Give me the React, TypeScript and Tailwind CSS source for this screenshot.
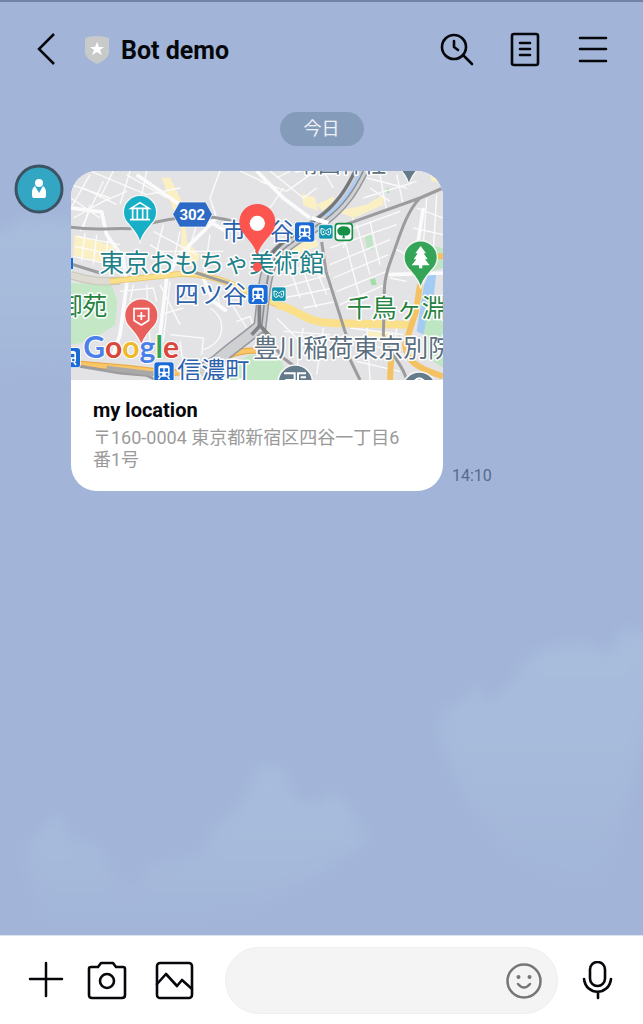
import React from 'react';

const minorRoads = [
  'M3 120 L60 20', 'M3 90 L90 150', 'M40 60 L140 110', 'M60 9 L230 80 L330 60',
  'M100 40 L30 190', 'M130 9 L90 90', 'M180 9 L150 110', 'M230 9 L215 80',
  'M3 50 L120 90', 'M10 150 L100 100 L170 70', 'M170 20 L290 90', 'M60 110 L40 180',
  'M20 205 L150 230', 'M15 235 L140 262', 'M10 265 L135 292', 'M45 195 L35 280', 'M80 200 L70 290', 'M115 205 L105 295',
  'M250 190 L380 260', 'M240 230 L330 290', 'M280 170 L260 250', 'M330 190 L300 330', 'M380 170 L340 300',
  'M270 250 L460 250', 'M420 200 L400 330', 'M150 370 L250 360 L260 400', 'M190 350 L180 400', 'M230 350 L240 520',
  'M270 350 L330 470', 'M300 340 L280 520', 'M340 420 L270 440', 'M300 500 L400 510 L395 560', 'M330 520 L340 590',
  'M420 420 C470 450 470 520 400 545', 'M480 400 L530 480', 'M500 460 L540 445 L560 500', 'M440 360 L450 420',
  'M450 9 L420 90 L440 150', 'M510 9 L620 60', 'M570 40 L650 70 L720 20', 'M600 9 L700 90 L740 60', 'M620 30 L660 9',
  'M640 60 L600 120', 'M760 9 L790 60', 'M680 120 L720 150', 'M900 60 L960 100', 'M880 90 L1040 40', 'M930 20 L950 130',
  'M980 20 L1000 110', 'M890 30 L1010 60', 'M860 170 L900 320', 'M900 160 L930 290', 'M800 200 L990 130',
  'M780 240 L980 170', 'M780 290 L960 215', 'M790 330 L955 260', 'M800 370 L950 310', 'M810 410 L945 350',
  'M820 200 L870 390', 'M850 150 L820 240', 'M640 320 L760 270', 'M630 360 L780 320', 'M640 390 L790 360',
  'M700 420 L800 400', 'M690 280 L740 420', 'M660 300 L690 390', 'M720 260 L770 380',
  'M620 450 L700 530', 'M640 490 L780 500', 'M700 480 L680 600', 'M760 480 L740 620', 'M840 480 L1000 500',
  'M870 520 L1000 560', 'M860 580 L990 610', 'M890 470 L900 636', 'M980 480 L960 636', 'M1040 120 L1119 150',
  'M1030 180 L1119 200', 'M1070 90 L1060 230', 'M1100 80 L1090 250', 'M970 240 L1010 260', 'M960 330 L1010 340',
];

const wideRoads = [
  'M3 120 L95 132 L110 200 L160 270 L170 350', 'M200 20 L330 110 L470 190', 'M440 150 L330 260 L290 330 L270 500',
  'M560 9 L640 90 L720 150', 'M170 350 L150 500 L130 560', 'M1060 120 L1040 250', 'M955 320 L1119 315',
  'M400 330 L430 400 L470 430',
];

const greyRoads = [
  'M3 178 C90 190 130 178 180 182 C250 160 320 145 400 146 C450 146 460 155 500 162',
  'M1119 60 L1050 90 L820 172',
  'M1050 90 C1010 130 990 200 965 270 C935 350 945 370 942 430 L940 500 C960 560 1000 590 1010 636',
  'M755 222 L768 310 L828 500 L838 570 L870 636',
  'M3 288 L100 318', 'M570 480 L640 570 L680 600', 'M3 590 L150 615 L230 622 L260 636', 'M370 312 L490 350',
];

const yellowAreas = [
  'M15 200 L135 235 L125 290 L10 262Z', 'M275 30 L300 28 L345 120 L350 220 L390 260 L375 300 L330 280 L335 190Z',
  'M695 78 L735 88 L745 130 L700 112Z', 'M800 130 L890 110 L940 80 L940 110 L850 150Z',
  'M740 110 L790 85 L800 110 L770 140Z', 'M640 240 L740 215 L745 235 L650 270Z', 'M1080 15 L1119 20 L1119 45 L1085 40Z',
  'M890 490 L960 490 L955 510 L890 505Z',
];

type LabelProps = { x: number; y: number; fill: string; size?: number; children: React.ReactNode };

function MapLabel({ x, y, fill, size = 75, children }: LabelProps) {
  return (
    <text
      x={x}
      y={y}
      fill={fill}
      fontSize={size}
      stroke="#ffffff"
      strokeWidth={9}
      strokeLinejoin="round"
      paintOrder="stroke"
      className="font-['Noto_Sans_CJK_JP',sans-serif]"
    >
      {children}
    </text>
  );
}

function Pin({ x, y, fill, children }: { x: number; y: number; fill: string; children?: React.ReactNode }) {
  return (
    <g transform={`translate(${x} ${y})`}>
      <path
        d="M0 94 C-5 66 -20 54 -34 37 A50 50 0 1 1 34 37 C20 54 5 66 0 94Z"
        fill={fill}
        stroke="#f5f5f5"
        strokeWidth="4"
      />
      {children}
    </g>
  );
}

function Train({ x, y }: { x: number; y: number }) {
  return (
    <g transform={`translate(${x} ${y})`}>
      <rect x="-2" y="-2" width="62" height="62" rx="10" fill="#fff" />
      <rect width="58" height="58" rx="8" fill="#1b6bd6" />
      <path d="M12 17 Q12 9 20 9 H38 Q46 9 46 17 V38 Q46 43 40 43 H18 Q12 43 12 38Z" fill="#fff" />
      <path d="M17 18 H27 V28 H17Z M31 18 H41 V28 H31Z" fill="#1b6bd6" />
      <circle cx="20" cy="36" r="4" fill="#1b6bd6" />
      <circle cx="38" cy="36" r="4" fill="#1b6bd6" />
      <path d="M18 43 L12 51 M40 43 L46 51" stroke="#fff" strokeWidth="5" />
    </g>
  );
}

function Metro({ x, y }: { x: number; y: number }) {
  return (
    <g transform={`translate(${x} ${y})`}>
      <rect width="43" height="43" rx="6" fill="#1295ad" stroke="#fff" strokeWidth="2" />
      <path
        d="M7 12 L14 13 L21 19 L29 13 L36 12 V25 L32 31 L26 30 L21 24 L17 30 L11 31 L7 25Z M14 19 V25 M29 19 V25"
        fill="none"
        stroke="#fff"
        strokeWidth="3"
      />
    </g>
  );
}

function LocationMap() {
  return (
    <svg viewBox="3 9 1116 627" className="block w-full" role="img" aria-label="my location map">
      <rect x="0" y="0" width="1122" height="640" fill="#e3e3e5" />

      {/* Parks and water */}
      <path d="M3 345 L125 350 L142 400 L135 470 L60 520 L3 530Z" fill="#c4e8c6" />
      <path d="M470 600 L540 560 L630 570 L660 636 L440 636Z" fill="#c4e8c6" />
      <path d="M1075 230 L1119 240 L1119 300 L1085 310Z M1060 430 L1119 400 L1119 600 L1060 560Z M885 200 L905 195 L910 245 L890 240Z" fill="#bfe6c3" />
      <path d="M1062 350 L1080 310 L1098 320 L1090 400 L1070 450 L1060 500 L1040 490Z" fill="#a3cbf3" />
      <path d="M950 62 L957 60 L958 75 L950 74Z M900 335 L915 330 L920 350 L905 352Z" fill="#9ee0a6" />
      {yellowAreas.map((d) => (
        <path key={d} d={d} fill="#fbf0c4" />
      ))}

      {/* Streets */}
      <g fill="none" stroke="#fbfbfb">
        {minorRoads.map((d) => (
          <path key={d} d={d} strokeWidth="4" />
        ))}
        {wideRoads.map((d) => (
          <path key={d} d={d} strokeWidth="11" />
        ))}
      </g>

      {/* Main roads */}
      <g fill="none" strokeLinejoin="round">
        <path d="M3 322 C50 335 90 345 150 338" stroke="#c9c6bb" strokeWidth="25" />
        <path d="M3 322 C50 335 90 345 150 338" stroke="#dedbd1" strokeWidth="19" />
        <path d="M120 340 L330 318 C400 315 450 335 490 350 L610 405 C690 425 700 462 780 465 L1015 470" stroke="#e8c766" strokeWidth="18" />
        <path d="M120 340 L330 318 C400 315 450 335 490 350 L610 405 C690 425 700 462 780 465 L1015 470" stroke="#fbe08c" strokeWidth="13" />
        <path d="M620 410 C690 425 700 462 780 465 L1015 470" stroke="#fbe08c" strokeWidth="24" />
        <path d="M30 588 L170 600 L300 615 L410 605 C450 570 500 545 560 548" stroke="#e9a83f" strokeWidth="19" />
        <path d="M30 588 L170 600 L300 615 L410 605 C450 570 500 545 560 548" stroke="#f9c566" strokeWidth="13" />
        <path d="M1050 350 L1038 430 L1005 530 C1010 580 1040 600 1119 625 M1085 265 H1119 M960 636 L965 540" stroke="#f5c263" strokeWidth="18" />
        {greyRoads.map((d) => (
          <path key={d} d={d} stroke="#9c9c9e" strokeWidth="9" />
        ))}
      </g>

      {/* Railway */}
      <g fill="none">
        <path d="M875 9 C850 60 820 110 760 155 C700 200 620 240 600 290 C580 340 580 400 570 475 C530 510 470 550 440 580 L390 610" stroke="#97999d" strokeWidth="40" />
        <path d="M875 9 C850 60 820 110 760 155 C700 200 620 240 600 290 C580 340 580 400 570 475 C530 510 470 550 440 580 L390 610" stroke="#cfd0d3" strokeWidth="31" />
        <path d="M880 9 C855 60 825 110 765 155 C705 200 625 240 605 290 C585 340 585 400 575 475" stroke="#8b8e93" strokeWidth="5" />
        <path d="M855 9 C830 60 800 110 745 150 C690 190 610 230 590 285" stroke="#74777c" strokeWidth="10" />
        <path d="M868 20 C840 70 815 110 765 145" stroke="#a9cdf5" strokeWidth="8" />
        <path d="M725 150 L775 165" stroke="#fff" strokeWidth="12" />
        <path d="M568 400 V475 L545 500 M568 470 L600 505" stroke="#808286" strokeWidth="11" />
        <path d="M110 600 L290 622" stroke="#aaa9a8" strokeWidth="14" />
      </g>

      {/* Place names */}
      <MapLabel x={676} y={12} fill="#5b6f7f" size={68}>靖国神社</MapLabel>
      <MapLabel x={456} y={216} fill="#2c62ad" size={72}>市</MapLabel>
      <MapLabel x={600} y={216} fill="#2c62ad" size={72}>谷</MapLabel>
      <MapLabel x={88} y={312} fill="#1f8189">東京おもちゃ美術館</MapLabel>
      <MapLabel x={314} y={404} fill="#2c62ad" size={72}>四ツ谷</MapLabel>
      <MapLabel x={830} y={448} fill="#25833f">千鳥ヶ淵</MapLabel>
      <MapLabel x={-38} y={442} fill="#25833f">御苑</MapLabel>
      <MapLabel x={550} y={566} fill="#5b6f7f">豊川稲荷東京別院</MapLabel>
      <MapLabel x={322} y={634} fill="#2c62ad" size={72}>信濃町</MapLabel>

      <Train x={675} y={163} />
      <Metro x={746} y={170} />
      <rect x="796" y="167" width="51" height="50" rx="9" fill="#fff" stroke="#159046" strokeWidth="5" />
      <path d="M821 175 C838 175 844 186 840 195 C836 204 828 203 823 202 L825 211 H817 L819 202 C810 205 802 198 802 190 C802 180 811 175 821 175Z" fill="#159046" />
      <Train x={535} y={350} />
      <Metro x={605} y={357} />
      <Train x={253} y={583} />
      <Train x={-28} y={540} />
      <rect x="0" y="270" width="9" height="33" fill="#1b6bd6" />

      {/* Route shield */}
      <path d="M308 139 L329 102 H407 L427 139 L407 177 H329Z" fill="#2d6ac6" stroke="#fff" strokeWidth="2" />
      <text x="367" y="155" textAnchor="middle" fill="#fff" fontSize="45" fontWeight="700" className="font-['Roboto',sans-serif]">
        302
      </text>

      {/* Points of interest */}
      <Pin x={210} y={132} fill="#16afc6">
        <path d="M-27 -11 L0 -28 L27 -11Z M-22 -8 V20 M-8 -8 V20 M8 -8 V20 M22 -8 V20 M-30 23 H30" fill="none" stroke="#fff" strokeWidth="5" />
      </Pin>
      <Pin x={214} y={442} fill="#e95f5c">
        <path d="M-22 -20 H22 V15 Q20 18 0 29 Q-20 18 -22 15Z M0 -10 V14 M-12 2 H12" fill="none" stroke="#fff" strokeWidth="5" />
      </Pin>
      <Pin x={1052} y={268} fill="#34a556">
        <path d="M0 -34 L16 -12 H9 L21 6 H13 L27 24 H5 V33 H-5 V24 H-27 L-13 6 H-21 L-9 -12 H-16Z" fill="#fff" />
      </Pin>
      <Pin x={1017} y={-42} fill="#647b8b" />
      <circle cx="676" cy="643" r="52" fill="#647b8b" stroke="#f5f5f5" strokeWidth="5" />
      <path d="M642 616 H674 V636 H646 M684 636 V616 H708 M692 628 H708" fill="none" stroke="#fff" strokeWidth="6" />
      <circle cx="1048" cy="664" r="52" fill="#647b8b" stroke="#f5f5f5" strokeWidth="5" />
      <path d="M1034 638 Q1048 624 1062 638" fill="none" stroke="#fff" strokeWidth="6" />

      <text x="40" y="570" fontSize="90" fontWeight="700" stroke="#fff" strokeWidth="6" paintOrder="stroke" className="font-['Lato',sans-serif]">
        <tspan fill="#4a80e8">G</tspan>
        <tspan fill="#d9463b">o</tspan>
        <tspan fill="#f0b728">o</tspan>
        <tspan fill="#4a80e8">g</tspan>
        <tspan fill="#35a355">l</tspan>
        <tspan fill="#d9463b">e</tspan>
      </text>

      {/* Current position */}
      <path d="M562 262 C554 232 536 218 520 196 A54 54 0 1 1 604 196 C588 218 570 232 562 262Z" fill="#fc554f" />
      <circle cx="562" cy="166" r="23" fill="#fff" />
      <circle cx="562" cy="297" r="14" fill="#fc554f" />
    </svg>
  );
}

function Clouds() {
  return (
    <svg
      className="pointer-events-none absolute inset-0 h-full w-full"
      viewBox="0 0 643 1024"
      preserveAspectRatio="xMidYMax slice"
      aria-hidden="true"
    >
      <defs>
        <linearGradient id="cloud" x1="0" y1="0" x2="0" y2="1">
          <stop offset="0" stopColor="#a8bddd" />
          <stop offset="0.5" stopColor="#a6badb" />
          <stop offset="1" stopColor="#a2b5d9" />
        </linearGradient>
        <filter id="soft" x="-20%" y="-20%" width="140%" height="140%">
          <feGaussianBlur stdDeviation="7" />
        </filter>
      </defs>
      <g filter="url(#soft)">
        <path d="M26 850 L40 830 L60 814 L70 840 L98 845 L112 872 L132 890 L152 864 L200 856 L215 828 L240 806 L260 768 L280 766 L295 800 L315 804 L335 792 L355 815 L368 840 L320 875 L250 915 L180 932 H40Z" fill="url(#cloud)" />
        <path d="M438 735 L446 708 L464 702 L476 682 L488 704 L512 684 L526 660 L548 648 L585 643 L612 654 L622 630 L650 634 L645 740 L625 810 L610 880 L595 902 L560 890 L500 850 L462 795Z" fill="url(#cloud)" />
        <path d="M-20 240 L30 218 L70 220 L120 240 V330 L70 370 L-20 390Z" fill="url(#cloud)" />
      </g>
    </svg>
  );
}

const stroke = {
  fill: 'none',
  stroke: 'currentColor',
  strokeLinecap: 'round',
  strokeLinejoin: 'round',
} as const;

function Header() {
  return (
    <header className="flex h-[98px] items-center border-t-2 border-[#7284a9] pr-8 pl-7">
      <button type="button" aria-label="Back" className="flex w-9 justify-center">
        <svg width="36" height="36" viewBox="0 0 36 36" {...stroke} strokeLinecap="butt" strokeLinejoin="miter" strokeWidth="2.5">
          <path d="M26 2 L11 17 L26 32" />
        </svg>
      </button>
      <svg width="26" height="30" viewBox="0 0 26 30" className="ml-5" aria-hidden="true">
        <path d="M1 3 Q13 -1 25 3 V18 Q24 24 13 29 Q2 24 1 18Z" fill="#c7cac9" />
        <path d="M13 7 L15 12 L20 12 L16 15 L18 20 L13 17 L8 20 L10 15 L6 12 L11 12Z" fill="#fff" />
      </svg>
      <h1 className="ml-[11px] flex-1 pt-0.5 text-[25px] leading-8 font-bold">Bot demo</h1>
      <div className="flex gap-8">
        <button type="button" aria-label="Search history">
          <svg width="36" height="36" viewBox="0 0 36 36" {...stroke} strokeWidth="2.6">
            <circle cx="15" cy="15" r="12" />
            <path d="M24 23 L33 32" />
            <path d="M15 9 V15 L19 18" />
          </svg>
        </button>
        <button type="button" aria-label="Notes">
          <svg width="36" height="36" viewBox="0 0 36 36" {...stroke} strokeWidth="2.6">
            <rect x="5" y="2" width="26" height="31" rx="2" />
            <path d="M13 11 H23 M13 17 H23 M13 23 H23" />
          </svg>
        </button>
        <button type="button" aria-label="Menu">
          <svg width="36" height="36" viewBox="0 0 36 36" {...stroke} strokeWidth="2.6">
            <path d="M5 6 H31 M5 17 H31 M5 29 H31" />
          </svg>
        </button>
      </div>
    </header>
  );
}

function Message() {
  return (
    <article className="mt-[18px] flex items-start px-[14px]">
      <svg width="50" height="50" viewBox="0 0 50 50" className="shrink-0" role="img" aria-label="Bot demo">
        <circle cx="25" cy="25" r="23" fill="#33a6c4" stroke="#3d5363" strokeWidth="3" />
        <circle cx="25" cy="19" r="4" fill="#fff" />
        <path d="M21 22 L25 29 L29 22 Q32 24 32 27 V32 Q32 34 30 34 H20 Q18 34 18 32 V27 Q18 24 21 22Z" fill="#fff" />
      </svg>
      <div className="mt-[7px] ml-[7px] w-[372px] overflow-hidden rounded-[26px] bg-white">
        <LocationMap />
        <div className="px-[22px] pt-[18px] pb-5">
          <h2 className="text-xl leading-6 font-bold">my location</h2>
          <p className="mt-[5px] pr-4 text-lg leading-[22px] text-[#9a9a9a]">〒160-0004 東京都新宿区四谷一丁目6番1号</p>
        </div>
      </div>
      <time className="mb-[3px] ml-[9px] self-end text-base text-[#566b8b]">14:10</time>
    </article>
  );
}

function Composer() {
  return (
    <footer className="relative flex items-center border-t border-[#dfe4ee] bg-white pt-[11px] pr-[27px] pb-[10px] pl-7">
      <button type="button" aria-label="Add">
        <svg width="36" height="40" viewBox="0 0 36 40" {...stroke} strokeWidth="2.5">
          <path d="M18 2 V35 M2 18 H34" />
        </svg>
      </button>
      <div className="ml-[23px] flex gap-7">
        <button type="button" aria-label="Camera">
          <svg width="40" height="40" viewBox="0 0 40 40" {...stroke} strokeWidth="2.6">
            <path d="M4 6 H11 L14 2 H26 L29 6 H36 Q38 6 38 8 V34 Q38 37 35 37 H5 Q2 37 2 34 V8 Q2 6 4 6Z" />
            <circle cx="20" cy="20" r="7" />
          </svg>
        </button>
        <button type="button" aria-label="Photos">
          <svg width="40" height="40" viewBox="0 0 40 40" {...stroke} strokeWidth="2.6">
            <rect x="2" y="2" width="35" height="35" rx="3" />
            <path d="M2 23 L11 13 L22 25 L27 19 L37 28" />
          </svg>
        </button>
      </div>
      <div className="ml-[30px] flex h-[67px] min-w-0 flex-1 items-center rounded-full border border-[#efefef] bg-[#f4f4f4] pr-[14px] pl-6">
        <input type="text" aria-label="Message" className="h-full min-w-0 flex-1 bg-transparent text-xl outline-none" />
        <button type="button" aria-label="Stickers" className="text-[#747775]">
          <svg width="38" height="38" viewBox="0 0 38 38" {...stroke} strokeWidth="2.5">
            <circle cx="19" cy="19" r="16.5" />
            <path d="M13 22 Q19 29 25 22" />
            <circle cx="13.5" cy="15" r="2" fill="currentColor" stroke="none" />
            <circle cx="24.5" cy="15" r="2" fill="currentColor" stroke="none" />
          </svg>
        </button>
      </div>
      <button type="button" aria-label="Voice message" className="ml-[22px]">
        <svg width="36" height="40" viewBox="0 0 36 40" {...stroke} strokeWidth="2.6">
          <rect x="10" y="1" width="15" height="24" rx="7.5" />
          <path d="M4 18 C6 35 29 35 31 18 M18 31 V37" />
        </svg>
      </button>
    </footer>
  );
}

export default function App() {
  return (
    <div className="relative flex min-h-screen flex-col bg-[#a2b5d9] font-['Roboto','Noto_Sans_CJK_JP',sans-serif] text-[#06070b]">
      <Clouds />
      <div className="relative flex-1">
        <Header />
        <main>
          <p className="mx-auto mt-[14px] w-fit rounded-full bg-[#859bba] px-6 py-1 text-lg leading-[26px] text-[#eef2f7]">今日</p>
          <Message />
        </main>
      </div>
      <Composer />
    </div>
  );
}
